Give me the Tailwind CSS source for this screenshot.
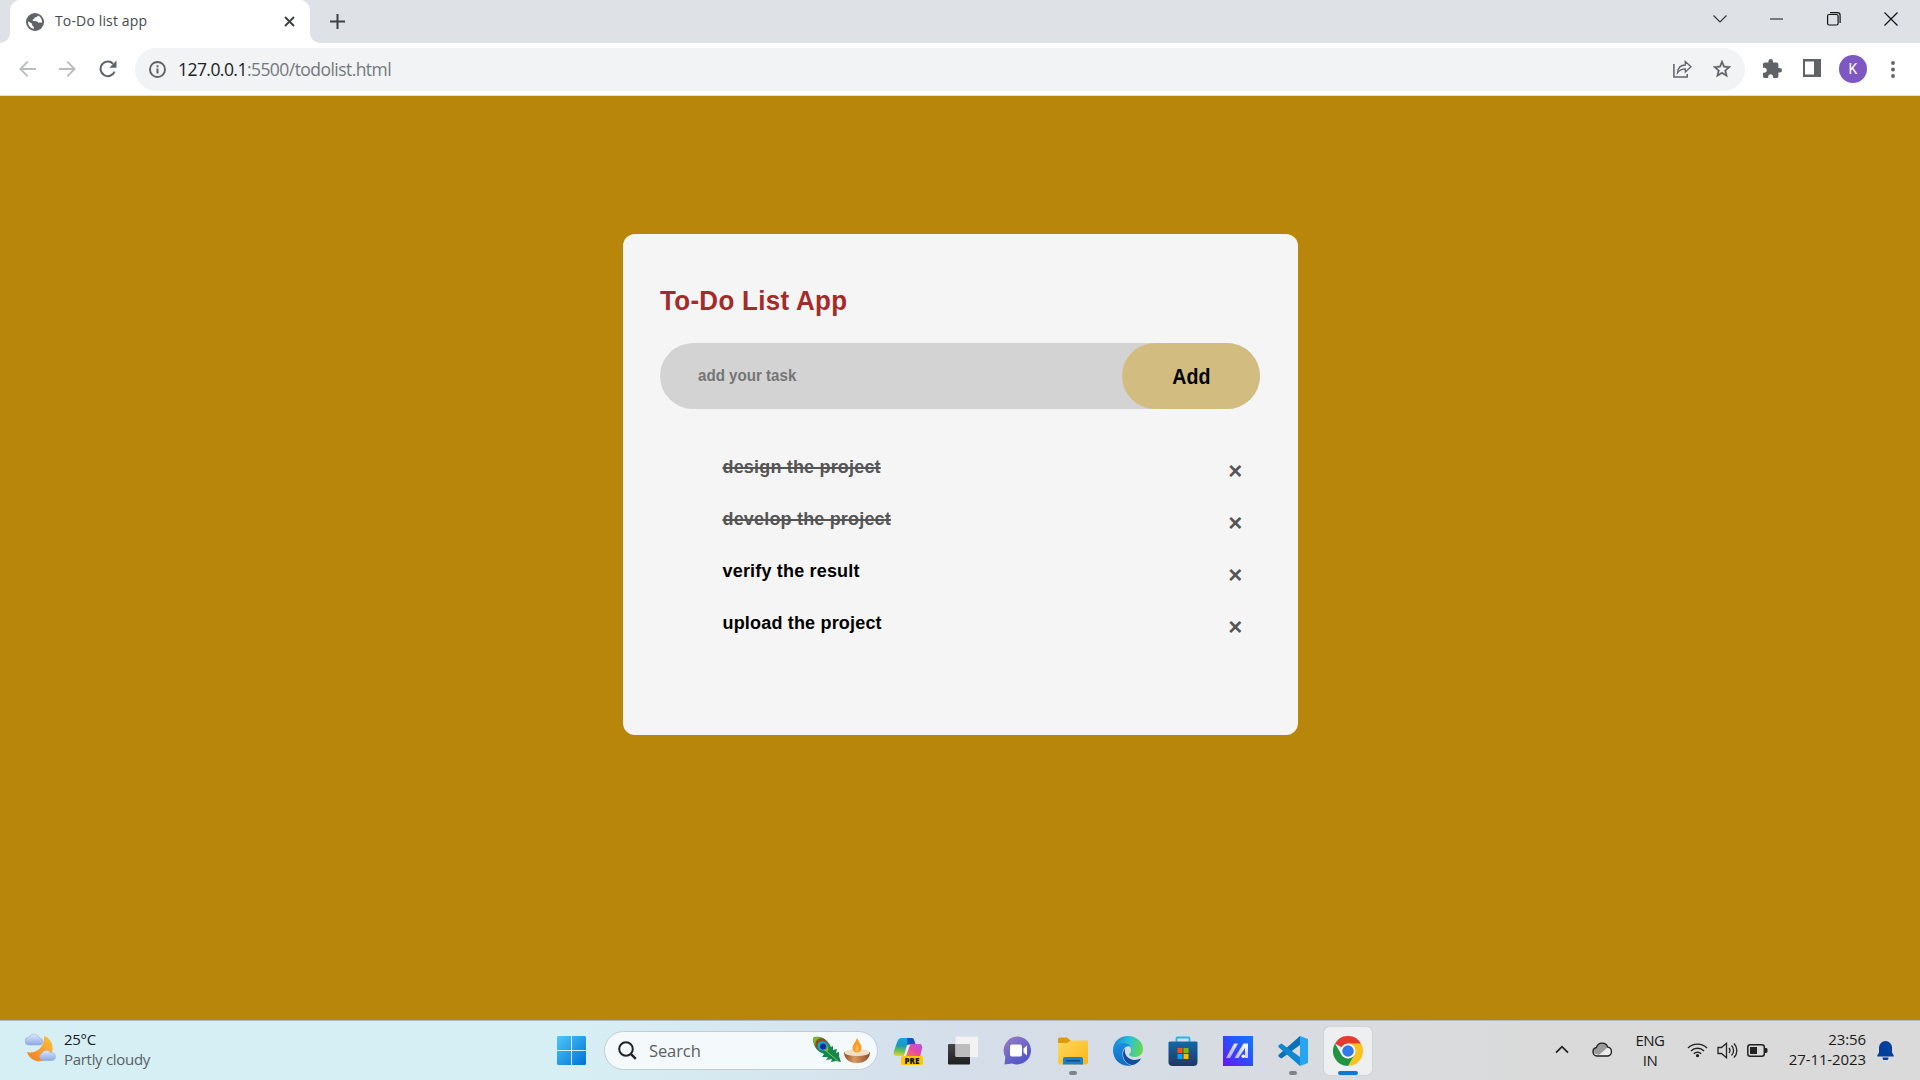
<!DOCTYPE html>
<html lang="en">
<head>
<meta charset="utf-8">
<title>To-Do list app</title>
<script src="https://cdn.jsdelivr.net/npm/@tailwindcss/browser@4"></script>
</head>
<body class="w-[1920px] h-[1080px] overflow-hidden flex flex-col font-['Open_Sans',sans-serif] text-[#202124]">
<!-- Tab strip -->
<header class="h-[43px] bg-[#dee1e6] flex items-end shrink-0">
  <svg class="w-[10px] h-[10px] shrink-0" viewBox="0 0 10 10"><path d="M10 0v10H0A10 10 0 0 0 10 0z" fill="#fff"/></svg>
  <div class="w-[300px] h-[43px] bg-white rounded-t-[10px] flex items-center pl-4 pr-[15px]">
    <svg class="w-[18px] h-[18px] shrink-0" viewBox="0 0 18 18"><circle cx="9" cy="9" r="9" fill="#5f6368"/><path d="M2 8.200c1.600 1.500 3 1.200 3.800 2.200.7.9-.1 1.700.8 2.300.8.5 1.400 1 1.300 3C4.500 15.200 1.500 12 2 8.200zM11.800 2.500c-.2 1.300-1 1.700-2.300 1.800-1.600.1-.6 1.700-2.100 2-1.100.3-1 1.600.3 1.700 1.700.2 3.300-.2 4 1.100.5 1 1.500.6 2.500.5.5-.1 1 .2 1.600.5.7-3.500-1-6.400-4-7.600z" fill="#fff"/></svg>
    <span class="ml-[11px] text-[14px] leading-5 whitespace-nowrap text-[#45494d] tracking-[0.15px] -mt-[2px]">To-Do list app</span>
    <svg class="w-[11px] h-[11px] ml-auto" viewBox="0 0 11 11" stroke="#3c4043" stroke-width="1.900"><path d="M1 1l9 9M10 1l-9 9"/></svg>
  </div>
  <svg class="w-[10px] h-[10px] shrink-0" viewBox="0 0 10 10"><path d="M0 0v10H10A10 10 0 0 1 0 0z" fill="#fff"/></svg>
  <svg class="w-[15px] h-[15px] ml-[10px] mb-[14px]" viewBox="0 0 15 15" stroke="#3c4043" stroke-width="2"><path d="M7.500 0v15M0 7.500h15"/></svg>
  <div class="ml-auto self-start flex items-center h-[37px] mr-[22px]">
    <svg class="w-[14px] h-[8px]" viewBox="0 0 14 8" fill="none" stroke="#333" stroke-width="1.100"><path d="M.5.5L7 7l6.500-6.500"/></svg>
    <svg class="w-[14px] h-[2px] ml-[43px]" viewBox="0 0 14 2"><path d="M0 .5h13v1H0z" fill="#111"/></svg>
    <svg class="w-[14px] h-[14px] ml-[43px]" viewBox="0 0 14 14" fill="none" stroke="#111" stroke-width="1.200"><rect x=".6" y="2.500" width="10.500" height="10.500" rx="1.500"/><path d="M3 .600h7.500a2.600 2.600 0 0 1 2.600 2.600V11"/></svg>
    <svg class="w-[14px] h-[14px] ml-[43px]" viewBox="0 0 14 14" stroke="#111" stroke-width="1.200"><path d="M.5.5l13 13M13.500.5l-13 13"/></svg>
  </div>
</header>
<!-- Toolbar -->
<div class="h-[53px] bg-white border-b border-[#dcdfe3] flex items-center shrink-0 pl-[19px] pr-[22px]">
  <svg class="w-[17px] h-[16px]" viewBox="0 0 17 16" fill="none" stroke="#babcbe" stroke-width="1.900"><path d="M17 8H2M8.700.700L1.400 8l7.300 7.300"/></svg>
  <svg class="w-[17px] h-[16px] ml-[23px]" viewBox="0 0 17 16" fill="none" stroke="#babcbe" stroke-width="1.900"><path d="M0 8h15M8.300.700L15.600 8l-7.300 7.300"/></svg>
  <svg class="w-[18px] h-[18px] ml-[23px]" viewBox="0 0 18 18"><path d="M15.600 11.700A7.300 7.300 0 1 1 14 3.700" fill="none" stroke="#5f6368" stroke-width="2"/><path d="M17.500.5v7.200h-7.200z" fill="#5f6368"/></svg>
  <div class="w-[1610px] h-[43px] ml-[18px] rounded-full bg-[#f1f3f4] flex items-center pl-[14px] pr-[14px]">
    <svg class="w-[17px] h-[17px]" viewBox="0 0 17 17"><circle cx="8.500" cy="8.500" r="7.500" fill="none" stroke="#5f6368" stroke-width="1.900"/><path d="M7.500 7.500h2v5h-2zM7.500 4.300h2v2h-2z" fill="#5f6368"/></svg>
    <span class="ml-[12px] text-[17.500px] leading-6 tracking-[-0.55px] whitespace-nowrap text-[#74787d]"><span class="text-[#202124]">127.0.0.1</span>:5500/todolist.html</span>
    <svg class="w-[19px] h-[18px] ml-auto" viewBox="0 0 19 18" fill="none" stroke="#5f6368" stroke-width="1.500"><path d="M.900 4v13h13.300v-3"/><path d="M4.500 12.800C5 7.800 8 5 12.300 5V1.500l5.700 5.300-5.700 5.200V8.800c-3.500 0-5.600 1-7.800 4z" stroke-width="1.300"/></svg>
    <svg class="w-[18px] h-[18px] ml-[21px]" viewBox="2 2 20 20"><path fill="#5f6368" stroke="#5f6368" stroke-width=".4" d="M22 9.240l-7.190-.620L12 2 9.190 8.630 2 9.240l5.460 4.730L5.820 21 12 17.270 18.180 21l-1.630-7.030L22 9.240zM12 15.400l-3.760 2.270 1-4.280-3.320-2.880 4.380-.380L12 6.100l1.710 4.040 4.380.380-3.320 2.880 1 4.280L12 15.400z"/></svg>
  </div>
  <svg class="w-[19px] h-[19px] ml-[18px] -mt-[2px]" viewBox="2 1 21 21"><path fill="#5f6368" d="M20.500 11H19V7c0-1.100-.900-2-2-2h-4V3.500a2.500 2.500 0 0 0-5 0V5H4c-1.100 0-1.990.900-1.990 2v3.800H3.500c1.490 0 2.700 1.210 2.700 2.700s-1.210 2.700-2.700 2.700H2V20c0 1.100.900 2 2 2h3.800v-1.500c0-1.490 1.210-2.700 2.700-2.700s2.700 1.210 2.700 2.700V22H17c1.100 0 2-.900 2-2v-4h1.500a2.500 2.500 0 0 0 0-5z"/></svg>
  <svg class="w-[18px] h-[18px] ml-[21px] mr-px -mt-[2px]" viewBox="0 0 18 18"><path fill="#5f6368" fill-rule="evenodd" d="M0 0h18v18H0zM2 2.500v13h9v-13z"/></svg>
  <div class="w-7 h-7 ml-[17px] rounded-full bg-[#7e57c2] text-white text-[14px] leading-7 text-center font-['Roboto',sans-serif]">K</div>
  <svg class="w-[4px] h-[17px] ml-auto mr-[3.500px]" viewBox="0 0 4 17" fill="#5f6368"><circle cx="2" cy="2" r="1.900"/><circle cx="2" cy="8.500" r="1.900"/><circle cx="2" cy="15" r="1.900"/></svg>
</div>
<!-- Page -->
<main class="h-[924px] bg-[#b8860b] shrink-0 pt-[138px] pl-[623px] font-['Liberation_Sans',sans-serif] font-bold">
  <section class="w-[675px] h-[501px] bg-[#f5f5f5] rounded-[12px] px-[37px] pt-[48px]">
    <h1 class="text-[28.500px] leading-9 text-[#a52a2a]"><span class="inline-block whitespace-nowrap origin-left scale-x-[0.91] tracking-[0.35px]">To-Do List App</span></h1>
    <div class="mt-[25px] h-[66px] w-[600px] rounded-full bg-[#d3d3d3] flex items-center pl-[37.500px]">
      <span class="text-[16px] text-[#757575] whitespace-nowrap inline-block origin-left scale-x-[0.945]">add your task</span>
      <button class="ml-auto w-[138px] h-[66px] rounded-full bg-[#d2bc7f] text-black text-[22px] font-bold"><span class="inline-block scale-x-[0.89]">Add</span></button>
    </div>
    <ul class="mt-[32px] pl-[62.500px] pr-[18.500px] text-[18px] leading-[52px] tracking-[0.18px] text-black">
      <li class="flex h-[52px] justify-between"><span class="line-through decoration-2 text-[#555] whitespace-nowrap">design the project</span><span class="text-[24px] text-[#555] pt-1">×</span></li>
      <li class="flex h-[52px] justify-between"><span class="line-through decoration-2 text-[#555] whitespace-nowrap">develop the project</span><span class="text-[24px] text-[#555] pt-1">×</span></li>
      <li class="flex h-[52px] justify-between"><span class="whitespace-nowrap">verify the result</span><span class="text-[24px] text-[#555] pt-1">×</span></li>
      <li class="flex h-[52px] justify-between"><span class="whitespace-nowrap">upload the project</span><span class="text-[24px] text-[#555] pt-1">×</span></li>
    </ul>
  </section>
</main>
<!-- Taskbar -->
<footer class="h-[60px] shrink-0 border-t border-[#b3b8bf] bg-linear-to-r from-[#d6eff4] from-30% via-[#d5deea] via-50% to-[#dadada] to-80% flex items-center text-[15px] leading-5">
  <svg class="w-[31px] h-[29px] ml-[25px] -mt-[6px]" viewBox="0 0 31 29"><defs><linearGradient id="mo" x1="1" y1="0" x2="0" y2="1"><stop offset="0" stop-color="#fbc43b"/><stop offset="1" stop-color="#f47b20"/></linearGradient><linearGradient id="cl" x1="0" y1="0" x2="0" y2="1"><stop offset="0" stop-color="#dfe8fb"/><stop offset="1" stop-color="#8fa9e4"/></linearGradient></defs><path d="M19 3a13 13 0 0 1 3.500 22.500A13 13 0 0 1 2 19c8 2 18-4 17-16z" fill="url(#mo)"/><path d="M4 12a4 4 0 0 1 0-8 5.500 5.500 0 0 1 9-1 3 3 0 0 1 1.500 2A3.500 3.500 0 0 1 14 12z" fill="url(#cl)" stroke="#8da5d8" stroke-width=".5"/><path d="M17 27.500a4 4 0 0 1 0-7.500 5 5 0 0 1 8.500-.5 4 4 0 0 1 1.500 8z" fill="url(#cl)" stroke="#8da5d8" stroke-width=".5"/></svg>
  <div class="ml-[8px] w-[100px] -mt-[4px] tracking-[-0.3px]"><div class="text-[#1b1b1b]">25°C</div><div class="text-[#566166] whitespace-nowrap">Partly cloudy</div></div>
  <svg class="w-[29px] h-[29px] ml-[393px]" viewBox="0 0 29 29"><defs><linearGradient id="wn" x1="0" y1="0" x2="1" y2="1"><stop offset="0" stop-color="#4cc9fb"/><stop offset="1" stop-color="#0070d6"/></linearGradient></defs><path fill="url(#wn)" d="M1 0h13v14H0V1zM15 0h13l1 1v13H15zM0 15h14v14H1l-1-1zM15 15h14v13l-1 1H15z"/></svg>
  <div class="w-[274px] h-[39px] ml-[18px] rounded-full bg-[#f4f9fc] border border-[#c3ccd5] flex items-center pl-[13px] pr-[7px]">
    <svg class="w-[19px] h-[19px]" viewBox="0 0 19 19" fill="none" stroke="#222" stroke-width="2"><circle cx="8" cy="8" r="6.800"/><path d="M12.800 12.800l5 5" stroke-width="2.400"/></svg>
    <span class="ml-[12px] text-[16.500px] tracking-[-0.1px] text-[#5b6063]">Search</span>
    <svg class="w-[30px] h-[28px] ml-auto -mt-[2px]" viewBox="0 0 30 28"><path d="M1 2c3-2 9-2 14 3 2 2 3 4 4 6l2-1v4l4-1-1 4 3-1 0 4 2 6-5-1-5 1 1-3-6 1 2-3-6 0 2-3C6 16 1 11 1 2z" fill="#16854a"/><path d="M1 2c4-2 9-1 12 2s4 6 3 11c-5 1-15-3-15-13z" fill="#84b82b"/><ellipse cx="9.500" cy="8.500" rx="6" ry="6.500" transform="rotate(-40 9.500 8.500)" fill="#87501e"/><circle cx="10.500" cy="10" r="4.800" fill="#0ca5e8"/><circle cx="11" cy="10.500" r="3" fill="#152a91"/><path d="M13 14l13 11" stroke="#6fcb6a" stroke-width="1"/></svg>
    <svg class="w-[26px] h-[26px] ml-[2px]" viewBox="0 0 26 26"><defs><linearGradient id="bw" x1="0" x2="1"><stop offset="0" stop-color="#8e4f2c"/><stop offset=".4" stop-color="#d89a5e"/><stop offset="1" stop-color="#8b4b2a"/></linearGradient></defs><path d="M0 14h26c0 6-4 11-13 11S0 20 0 14z" fill="url(#bw)"/><ellipse cx="13" cy="14.500" rx="12.500" ry="3.600" fill="#f1dfc7"/><path d="M13 0c2 4 4.500 7 4.500 10a4.500 4.500 0 0 1-9 0C8.500 7 11.500 4 13 0z" fill="#ff9a1f"/><path d="M13 6c1 2 2 4 2 5.500a2 2 0 0 1-4 0C11 10 12 8 13 6z" fill="#ffb957"/></svg>
  </div>
  <nav class="ml-[6px] flex items-center gap-[7px]">
    <div class="w-12 h-12 grid place-items-center">
      <svg class="w-[30px] h-[30px]" viewBox="0 0 30 30"><defs><linearGradient id="c1" x1=".3" y1="0" x2=".2" y2="1"><stop offset="0" stop-color="#14a4e8"/><stop offset=".4" stop-color="#1a98c0"/><stop offset=".7" stop-color="#67c254"/><stop offset="1" stop-color="#f3cf28"/></linearGradient><linearGradient id="c2" x1="1" y1="0" x2="0" y2="1"><stop offset="0" stop-color="#a85af0"/><stop offset=".5" stop-color="#e64a9f"/><stop offset="1" stop-color="#ff8052"/></linearGradient></defs><path d="M9 2h9c3 0 3 3 4 5h-4c-2 0-3 1-3.500 3l-2.500 8c-.8 2-2 2-4 2H4c-3 0-4-2-3-5L4.500 5C5.300 3 6.500 2 9 2z" fill="url(#c1)"/><path d="M14 2h5c2 0 2.500 3 3.500 6H18c-2 0-3 .5-3.500 2z" fill="#1553c0"/><path d="M18 8h8c3 0 3.500 2 3 5l-2 8H12l3.500-11c.5-1.500 1-2 2.500-2z" fill="url(#c2)"/><path d="M14 9h3l-4 11h-2z" fill="#eceff8"/><rect x="8" y="20" width="22" height="9" rx="2" fill="#fcc900"/><text x="19" y="27.600" font-family="Open Sans" font-size="8" font-weight="800" text-anchor="middle" fill="#111">PRE</text></svg>
    </div>
    <div class="w-12 h-12 grid place-items-center">
      <svg class="w-[30px] h-[30px]" viewBox="0 0 30 30"><defs><linearGradient id="tv" x1="0" y1="0" x2="0" y2="1"><stop offset="0" stop-color="#454545"/><stop offset="1" stop-color="#1f1f1f"/></linearGradient></defs><rect x="0" y="8" width="22" height="20.500" rx="1" fill="url(#tv)"/><rect x="7.500" y=".5" width="22.500" height="20.500" rx="1" fill="#f2f2f2"/><path d="M7.500 8H22v13H8.500l-1-1z" fill="#bdbdbd"/></svg>
    </div>
    <div class="w-12 h-12 grid place-items-center">
      <svg class="w-[30px] h-[30px]" viewBox="0 0 30 30"><defs><linearGradient id="ch" x1="0" y1="0" x2=".6" y2="1"><stop offset="0" stop-color="#9a7fc0"/><stop offset="1" stop-color="#4f55ca"/></linearGradient></defs><path d="M15.500 .500A14 14 0 1 1 9 27.500L1.500 28.500l.8-7.500A14 14 0 0 1 15.500.5z" fill="url(#ch)"/><rect x="7" y="8.500" width="12" height="12" rx="2" fill="#fff"/><path d="M20.500 12.500l3.500-3v10l-3.500-3z" fill="#fff"/></svg>
    </div>
    <div class="w-12 h-12 grid place-items-center relative">
      <svg class="w-[30px] h-[28px]" viewBox="0 0 30 28"><defs><linearGradient id="fo" x1="0" y1="0" x2="1" y2="1"><stop offset="0" stop-color="#ffd95c"/><stop offset="1" stop-color="#f9b51a"/></linearGradient></defs><path d="M0 2a1.500 1.500 0 0 1 1.500-1.500H9L13 4v4H0z" fill="#dd9a0c"/><path d="M0 6h9l4-2.500h16l1 1V26l-1.500 1.500h-27L0 26z" fill="url(#fo)"/><path d="M5 27.500V22a2 2 0 0 1 2-2h16a2 2 0 0 1 2 2v5.500z" fill="#1683d0"/><rect x="8" y="23" width="14" height="1.500" rx=".7" fill="#0a4a84"/></svg>
      <i class="absolute bottom-0 left-5 w-2 h-1 rounded-full bg-[#818487]"></i>
    </div>
    <div class="w-12 h-12 grid place-items-center">
      <svg class="w-[30px] h-[30px]" viewBox="0 0 30 30"><defs><linearGradient id="e1" x1="0" y1=".3" x2="1" y2=".5"><stop offset="0" stop-color="#1a86d8"/><stop offset=".5" stop-color="#2cbfd8"/><stop offset="1" stop-color="#66d94b"/></linearGradient><linearGradient id="e2" x1="0" y1="0" x2="0" y2="1"><stop offset="0" stop-color="#1b8fdf"/><stop offset="1" stop-color="#0f6dc6"/></linearGradient></defs><path d="M0 14C0 6 6.500 0 15 0c8.500 0 15 6 15 13 0 4.500-3.500 8-8 8-3.500 0-6-1.200-6-2.500 0-1 2-1.500 2-4.500 0-3.500-3.500-6-8-6-5 0-9 3-10 6z" fill="url(#e1)"/><path d="M0 14c.8-4 5-7 10-7 4 0 6.500 1.500 7.500 3.500C13 9 9.500 13 9.500 18c0 6 4 10.500 9.500 11.400C8 31.500 0 24 0 14z" fill="url(#e2)"/><path d="M12 12.500c-5 6 0 16.500 8 16.500 3.500-1 6.500-3.500 8-6.500-9 4-17.500-1-16-10z" fill="#114f9d"/></svg>
    </div>
    <div class="w-12 h-12 grid place-items-center">
      <svg class="w-[30px] h-[30px]" viewBox="0 0 30 30"><defs><linearGradient id="st" x1="0" y1="0" x2="0" y2="1"><stop offset="0" stop-color="#1468a8"/><stop offset="1" stop-color="#223661"/></linearGradient></defs><path d="M8.500 6V2.500c0-.7.300-1 1-1h11c.7 0 1 .3 1 1V6" fill="none" stroke="#23b6ea" stroke-width="1.800"/><path d="M.5 6.500l1-1h27l1 1V26a4 4 0 0 1-4 4h-21a4 4 0 0 1-4-4z" fill="url(#st)"/><path d="M9.500 12h5v5h-5z" fill="#f25022"/><path d="M15.500 12h5v5h-5z" fill="#7fba00"/><path d="M9.500 18h5v5h-5z" fill="#00a4ef"/><path d="M15.500 18h5v5h-5z" fill="#ffb900"/></svg>
    </div>
    <div class="w-12 h-12 grid place-items-center">
      <svg class="w-[30px] h-[30px]" viewBox="0 0 30 30"><defs><linearGradient id="as" x1="1" y1="0" x2="0" y2="1"><stop offset="0" stop-color="#0f7bff"/><stop offset=".5" stop-color="#2c4cff"/><stop offset="1" stop-color="#6a12f5"/></linearGradient><linearGradient id="aw" x1="1" y1="0" x2="0" y2="1"><stop offset="0" stop-color="#fff"/><stop offset="1" stop-color="#a9a4ff"/></linearGradient></defs><path d="M0 0h30v30H0z" fill="url(#as)"/><path d="M3 22L11 7.500h4L7 22zM11.500 22l9-14.500H25V22h-3V12l-6.500 10z" fill="url(#aw)"/><circle cx="20.300" cy="20.300" r="1.700" fill="#fff"/></svg>
    </div>
    <div class="w-12 h-12 grid place-items-center relative">
      <svg class="w-[30px] h-[30px]" viewBox="0 0 30 30"><path d="M22 0v9L3.500 22.500 1 21c-1-1-1-1.700 0-2.500z" fill="#0a70b8"/><path d="M22 30v-9L3.500 7.500 1 9c-1 1-1 1.700 0 2.500z" fill="#0f86d0"/><path d="M22 0l8 3v24l-8 3z" fill="#27a5f2"/></svg>
      <i class="absolute bottom-0 left-5 w-2 h-1 rounded-full bg-[#818487]"></i>
    </div>
    <div class="w-12 h-12 grid place-items-center relative rounded-[5px] bg-[#eeeff1] shadow-[0_0_1px_#999]">
      <svg class="w-[30px] h-[30px]" viewBox="0 0 48 48"><path d="M24 24L3.200 12A24 24 0 0 1 44.800 12z" fill="#e33b2e"/><path d="M24 12h20.800A24 24 0 0 1 24 48l10.400-18z" fill="#fcc31e"/><path d="M3.200 12l10.400 18L24 36l10.400-6L24 48A24 24 0 0 1 3.200 12z" fill="#229342"/><circle cx="24" cy="24" r="12" fill="#fff"/><circle cx="24" cy="24" r="9.300" fill="#2f7bee"/></svg>
      <i class="absolute bottom-0 left-[14px] w-5 h-1 rounded-full bg-[#0a78d4]"></i>
    </div>
  </nav>
  <div class="ml-auto mr-[26px] flex items-center text-[#1b1b1b]">
    <svg class="w-[14px] h-[9px] -mt-[2px]" viewBox="0 0 14 9" fill="none" stroke="#222" stroke-width="1.800"><path d="M1 7.700l6-6 6 6"/></svg>
    <svg class="w-[21px] h-[15px] ml-[23px] -mt-[2px]" viewBox="0 0 21 15"><path d="M5 14a4.300 4.300 0 0 1-.6-8.500 6 6 0 0 1 11.400-.3A4.500 4.500 0 0 1 16 14z" fill="#ececec"/><path d="M1 11a4.300 4.300 0 0 1 3.400-5.500 6 6 0 0 1 11.400-.3l-9 7.800z" fill="#9b9b9b"/><path d="M5 14a4.300 4.300 0 0 1-.6-8.500 6 6 0 0 1 11.400-.3A4.500 4.500 0 0 1 16 14z" fill="none" stroke="#222" stroke-width="1.300"/></svg>
    <div class="ml-[22px] w-[30px] text-center -mt-[2px] tracking-[-0.5px]"><div>ENG</div><div>IN</div></div>
    <svg class="w-[21px] h-[16px] ml-[22px] -mt-[2px]" viewBox="0 0 21 16" fill="none" stroke="#222" stroke-width="1.400"><path d="M1 6a13.500 13.500 0 0 1 19 0M4 9a9.200 9.200 0 0 1 13 0M6.800 11.700a5.300 5.300 0 0 1 7.400 0"/><circle cx="10.500" cy="13.700" r="1.600" fill="#222" stroke="none"/></svg>
    <svg class="w-[21px] h-[17px] ml-[9px] -mt-px" viewBox="0 0 21 17" fill="none" stroke="#222" stroke-width="1.300"><path d="M1 5.500h3.500L9.500 1.300v14.400l-5-4.200H1z"/><path d="M12 6a4 4 0 0 1 0 5M14.500 3.500a7 7 0 0 1 0 10M17 1.500a10 10 0 0 1 0 14"/></svg>
    <svg class="w-[21px] h-[13px] ml-[9px] -mt-px" viewBox="0 0 21 13"><rect x=".8" y=".8" width="16.500" height="11.400" rx="2.500" fill="none" stroke="#222" stroke-width="1.500"/><path d="M3 3h7v7H3zM18 4h1.500l1 1v3l-1 1H18z" fill="#222"/></svg>
    <div class="ml-[18px] w-[80px] text-right -mt-[4px] whitespace-nowrap tracking-[-0.1px]"><div>23:56</div><div>27-11-2023</div></div>
    <svg class="w-[17px] h-[19px] ml-[11px]" viewBox="0 0 17 19"><path d="M8.500 0a6.500 6.500 0 0 1 6.500 6.500v5l1.800 3.200v.8H.2v-.8L2 11.500v-5A6.500 6.500 0 0 1 8.500 0zM5.500 16.500h6a3 3 0 0 1-6 0z" fill="#003f9c"/></svg>
  </div>
</footer>
</body>
</html>
